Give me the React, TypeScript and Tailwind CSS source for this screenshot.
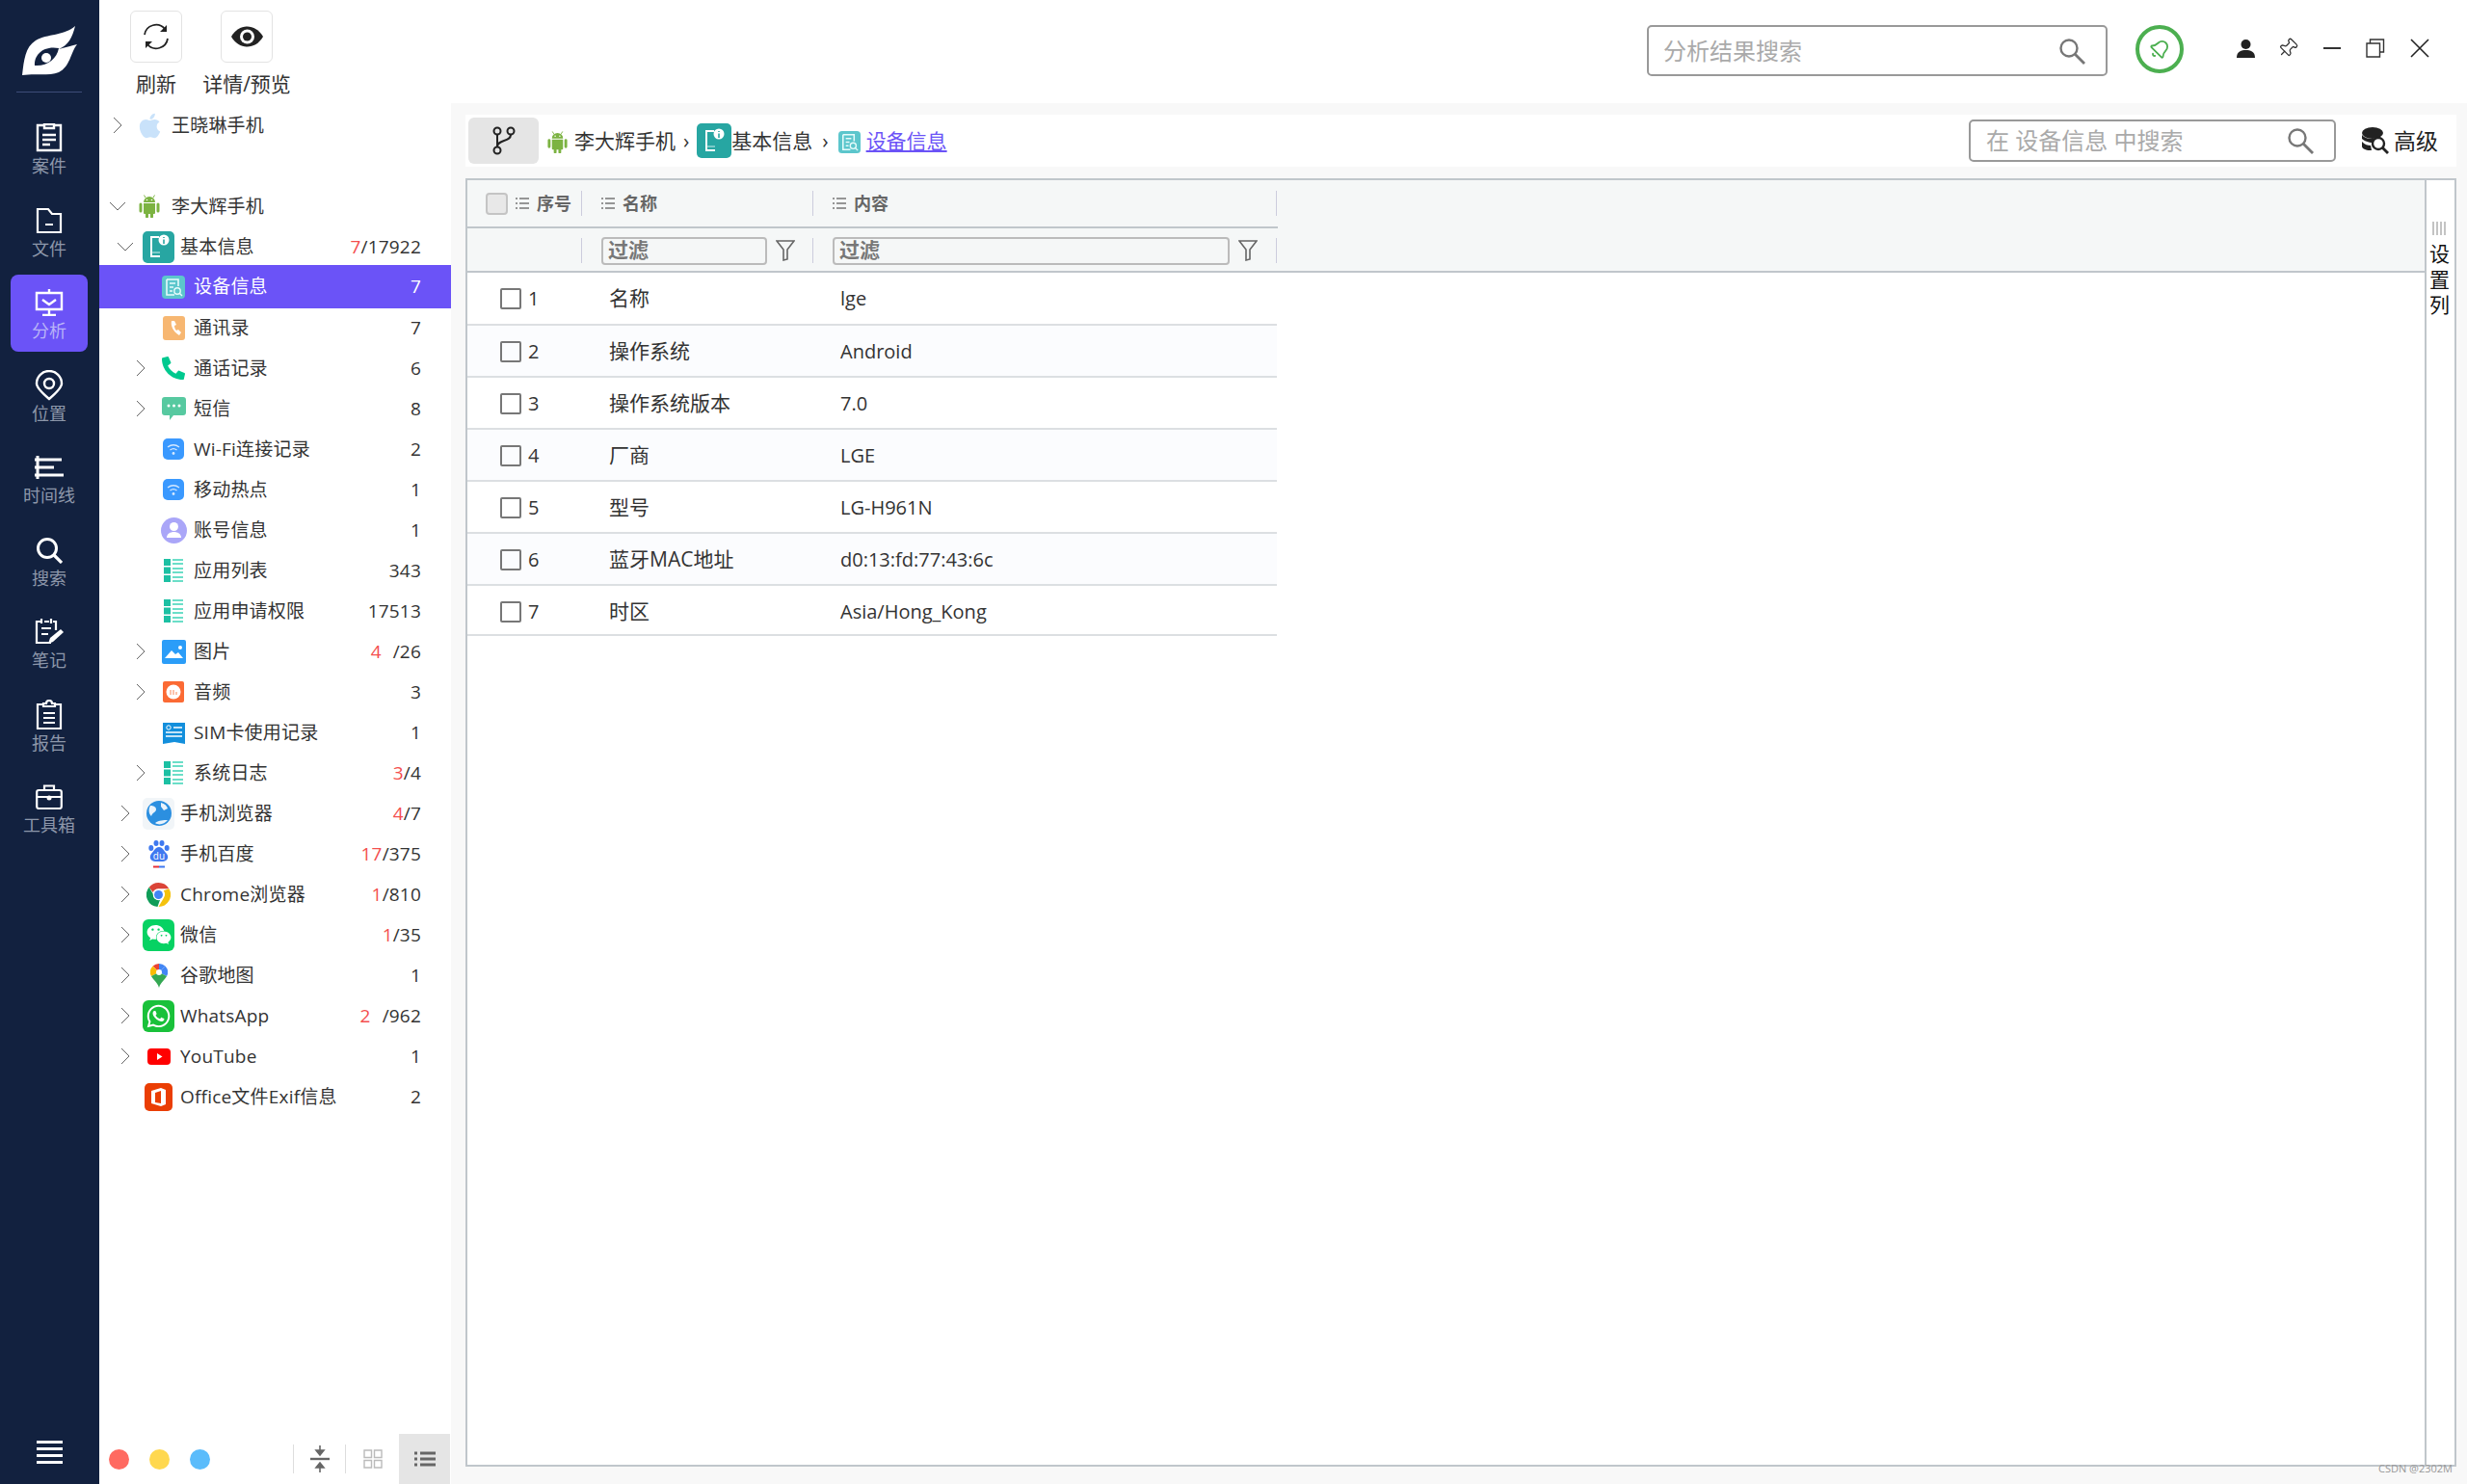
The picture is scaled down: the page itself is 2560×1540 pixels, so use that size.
import { useState, type ReactNode } from 'react';
import { FaApple, FaPhoneAlt, FaWeixin, FaWhatsapp } from 'react-icons/fa';
import { Bell, Pin } from 'lucide-react';

const S = (p: { w: number; h: number; vb?: string; children: ReactNode; className?: string }) => (
  <svg width={p.w} height={p.h} viewBox={p.vb ?? `0 0 ${p.w} ${p.h}`} fill="none" className={p.className}>
    {p.children}
  </svg>
);

const navIcons: Record<string, ReactNode> = {
  案件: (
    <S w={28} h={30}>
      <path d="M9 2H2v26h24V2h-7M9 1h10v4H9zM7 12h14M7 17h14M7 22h8" stroke="#fff" strokeWidth="2.4" />
    </S>
  ),
  文件: (
    <S w={28} h={28}>
      <path d="M2 2h11l4 5h9v19H2zM10 18h8" stroke="#fff" strokeWidth="2.2" />
    </S>
  ),
  分析: (
    <S w={30} h={28}>
      <path d="M2 4h26v17H2zM15 0v4M15 21v5M8 27h14M8 11l7 5 7-5" stroke="#fff" strokeWidth="2.4" />
    </S>
  ),
  位置: (
    <S w={30} h={32}>
      <path d="M15 30C8 24 2 18 2 14a13 13 0 0 1 26 0c0 4-6 10-13 16z" stroke="#fff" strokeWidth="2.4" />
      <circle cx="15" cy="14" r="5" stroke="#fff" strokeWidth="2.4" />
    </S>
  ),
  时间线: (
    <S w={30} h={24}>
      <path d="M3 0v24M0 4h28M0 12h20M0 20h30" stroke="#fff" strokeWidth="3" />
    </S>
  ),
  搜索: (
    <S w={28} h={28}>
      <circle cx="12" cy="12" r="9.5" stroke="#fff" strokeWidth="3" />
      <path d="M19 19l8 8" stroke="#fff" strokeWidth="3.2" />
    </S>
  ),
  笔记: (
    <S w={30} h={28}>
      <path d="M7 3H2v22h15M10 3h5M19 3h3v9M7 0v5M17 0v5M7 10h10M7 16h7" stroke="#fff" strokeWidth="2.2" />
      <path d="M14 26l2-6 11-9 3 3-11 10z" fill="#fff" />
    </S>
  ),
  报告: (
    <S w={28} h={32}>
      <path d="M8 5H2v25h24V5h-6M8 7V4h3a3 3 0 0 1 6 0h3v3zM8 14h12M8 19h12M8 24h12" stroke="#fff" strokeWidth="2.2" />
    </S>
  ),
  工具箱: (
    <S w={28} h={26}>
      <rect x="1.2" y="6" width="25.6" height="19" rx="2" stroke="#fff" strokeWidth="2.2" />
      <path d="M9 6V1.5h10V6M1 13h26" stroke="#fff" strokeWidth="2.2" />
      <circle cx="14" cy="14" r="2.5" fill="#fff" />
    </S>
  ),
};

const navItems = ['案件', '文件', '分析', '位置', '时间线', '搜索', '笔记', '报告', '工具箱'];

function Logo() {
  return (
    <S w={57} h={51}>
      <path
        d="M0 51C2 35 3 22 14 15 26 8 44 10 55 0 52 12 48 20 38 24 46 22 52 20 57 19 50 28 50 42 38 48 28 52 12 49 0 51Z"
        fill="#fff"
      />
      <path d="M13 41C12 30 22 20 38 23 36 34 26 42 13 41Z" fill="#12213f" />
      <circle cx="25" cy="33" r="5" fill="#fff" />
    </S>
  );
}

function Nav() {
  const [active] = useState('分析');
  return (
    <nav className="flex w-[103px] shrink-0 flex-col items-center bg-[#12213f] pr-px">
      <div className="flex h-[96px] w-[68px] shrink-0 items-start justify-center border-b border-[#3d4c78] pt-[27px]">
        <Logo />
      </div>
      <div className="mt-[18px] flex flex-col gap-[5.5px]">
        {navItems.map((n) => (
          <div
            key={n}
            className={`flex h-[80px] w-[80px] flex-col items-center rounded-[8px] pt-[13px] ${n === active ? 'bg-[#6b53f7] text-[#b9b3f7]' : 'text-[#8d97aa]'}`}
          >
            <div className="flex h-[32px] items-center">{navIcons[n]}</div>
            <div className="mt-[2px] text-[18px] leading-[22px]">{n}</div>
          </div>
        ))}
      </div>
      <div className="mt-auto mb-[21px] flex flex-col gap-[4px]">
        {[0, 1, 2, 3].map((i) => (
          <div key={i} className="h-[3px] w-[27px] bg-white" />
        ))}
      </div>
    </nav>
  );
}

const Chevron = ({ open }: { open?: boolean }) =>
  open ? (
    <S w={18} h={10}>
      <path d="M1 1l8 8 8-8" stroke="#666" />
    </S>
  ) : (
    <S w={10} h={18}>
      <path d="M1 1l8 8-8 8" stroke="#666" />
    </S>
  );

const AndroidIcon = ({ size = 24 }: { size?: number }) => (
  <S w={size} h={size} vb="0 0 22 24">
    <path d="M5 8a6 6 0 0 1 12 0z" fill="#7cb342" />
    <path d="M7 3L5.500 0.500M15 3l1.500-2.500" stroke="#7cb342" />
    <circle cx="8.500" cy="5.500" r="0.800" fill="#fff" />
    <circle cx="13.500" cy="5.500" r="0.800" fill="#fff" />
    <path d="M5 9h12v10a1 1 0 0 1-1 1H6a1 1 0 0 1-1-1z" fill="#7cb342" />
    <path d="M2 10v7M20 10v7M8.500 20v3M13.500 20v3" stroke="#7cb342" strokeWidth="3" strokeLinecap="round" />
  </S>
);

const BaseInfoIcon = () => (
  <div className="flex h-[33px] w-[33px] items-center justify-center rounded-[5px] bg-[#27a6a2]">
    <S w={24} h={26}>
      <path d="M12 3H4v20h9" stroke="#fff" strokeWidth="2" />
      <path d="M4 19h9" stroke="#cfeeee" strokeWidth="1" />
      <circle cx="17" cy="6" r="5.500" fill="#fff" />
      <path d="M17 3v1M17 5.500V10" stroke="#27a6a2" strokeWidth="1.600" />
    </S>
  </div>
);

const DocIcon = ({ size = 24 }: { size?: number }) => (
  <S w={size} h={size} vb="0 0 24 24">
    <rect width="24" height="24" rx="4" fill="#5cc6cc" />
    <path d="M5 4h12v7M5 4v16h8M8 8h6M8 12h4M8 16h3" stroke="#e6fbfb" strokeWidth="1.600" />
    <circle cx="16" cy="16" r="3.200" stroke="#e6fbfb" strokeWidth="1.400" />
    <path d="M18 18l3 3" stroke="#e6fbfb" strokeWidth="1.400" />
  </S>
);

const ListIcon = () => (
  <S w={20} h={24}>
    <path d="M0 0h7v7H0zM0 8.500h7v7H0zM0 17h7v7H0z" fill="#1cc0a3" />
    <path d="M9 1h11M9 5h11M9 10h11M9 14h11M9 19h11M9 23h11" stroke="#3bd3b7" strokeWidth="1.500" />
  </S>
);

const WifiIcon = () => (
  <S w={22} h={22}>
    <rect width="22" height="22" rx="5" fill="#3a99ff" />
    <path d="M5 9c4-3 8-3 12 0M7.500 12c2.500-2 4.500-2 7 0" stroke="#d6e9ff" strokeWidth="1.300" />
    <circle cx="11" cy="15.500" r="1.400" fill="#d6e9ff" />
  </S>
);

const treeIcon: Record<string, ReactNode> = {
  apple: <FaApple size={29} color="#c9e2fa" />,
  android: <AndroidIcon />,
  base: <BaseInfoIcon />,
  doc: <DocIcon />,
  contacts: (
    <S w={23} h={25}>
      <rect width="23" height="25" rx="3" fill="#f7b772" />
      <path d="M9 5c-1 4 1 11 8 15l2-3-3-3-2 1c-1-1-2-3-2-5l2-1-2-4z" fill="#fff" />
    </S>
  ),
  phone: <FaPhoneAlt size={24} color="#00c98f" />,
  sms: (
    <S w={25} h={24}>
      <path d="M3 0h19a3 3 0 0 1 3 3v13a3 3 0 0 1-3 3H12l-4 5v-5H3a3 3 0 0 1-3-3V3a3 3 0 0 1 3-3z" fill="#57c9a0" />
      <circle cx="7" cy="9" r="1.500" fill="#fff" />
      <circle cx="12.500" cy="9" r="1.500" fill="#fff" />
      <circle cx="18" cy="9" r="1.500" fill="#fff" />
    </S>
  ),
  wifi: <WifiIcon />,
  account: (
    <S w={27} h={27}>
      <circle cx="13.500" cy="13.500" r="13.500" fill="#aaa6f8" />
      <circle cx="13.500" cy="9.500" r="4.500" fill="#fff" />
      <path d="M6 21c0-8 15-8 15 0z" fill="#fff" />
    </S>
  ),
  list: <ListIcon />,
  image: (
    <S w={25} h={25}>
      <rect width="25" height="25" rx="2" fill="#2b9df8" />
      <path d="M3 19l7-8 4 4 3-2 5 6z" fill="#fff" />
      <circle cx="19" cy="8" r="2" fill="#fff" />
    </S>
  ),
  audio: (
    <S w={22} h={22}>
      <rect width="22" height="22" rx="2" fill="#fb6a34" />
      <circle cx="11" cy="11" r="7.500" fill="#fff" />
      <path d="M8 9v5M11 9v5M14 11v3" stroke="#fb9a74" strokeWidth="1.200" />
    </S>
  ),
  sim: (
    <S w={23} h={23}>
      <path d="M0 1h23v22l-11-2-12 2z" fill="#138fdc" />
      <circle cx="6" cy="6" r="2.200" stroke="#fff" />
      <path d="M11 6h9M3 11h17M3 15h17" stroke="#fff" strokeWidth="1.500" />
    </S>
  ),
  globe: (
    <div className="flex h-[33px] w-[33px] items-center justify-center rounded-[5px] bg-[#f1f5f8]">
      <S w={26} h={26}>
        <circle cx="13" cy="13" r="13" fill="#2b8fe0" />
        <path d="M4 5c3 0 6 1 6 4s-4 3-5 7c-3-3-3-8-1-11zM15 2c4 1 6 3 7 6l-4 2-3-4zM9 23c4-3 9-3 13-3-3 4-9 6-13 3z" fill="#eaf3fb" />
      </S>
    </div>
  ),
  baidu: (
    <S w={22} h={29}>
      <ellipse cx="2.800" cy="8" rx="2.500" ry="3" fill="#3f79f0" />
      <ellipse cx="8" cy="3" rx="2.500" ry="3" fill="#3f79f0" />
      <ellipse cx="14" cy="3" rx="2.500" ry="3" fill="#3f79f0" />
      <ellipse cx="19.200" cy="8" rx="2.500" ry="3" fill="#3f79f0" />
      <path d="M11 7c4 0 5 4 8 7 3 4 0 8-4 8H7c-4 0-7-4-4-8 3-3 4-7 8-7z" fill="#3f79f0" />
      <text x="11" y="20" textAnchor="middle" fontSize="10" fill="#fff" fontFamily="Open Sans">du</text>
      <path d="M5 27.500h6" stroke="#e5303a" strokeWidth="2" />
      <path d="M11 27.500h6" stroke="#3f79f0" strokeWidth="2" />
    </S>
  ),
  chrome: (
    <S w={25} h={25} vb="0 0 24 24">
      <path d="M12 0a12 12 0 0 1 10.400 6H12a6 6 0 0 0-5.500 3.500L2.600 4.500A12 12 0 0 1 12 0z" fill="#db4437" />
      <path d="M22.400 6A12 12 0 0 1 12 24l5.200-9A6 6 0 0 0 17 8z" fill="#f4c20d" />
      <path d="M2.600 4.500L7 12a5 5 0 0 0 6.500 5L11 24A12 12 0 0 1 2.600 4.500z" fill="#0f9d58" />
      <circle cx="12" cy="12" r="5.500" fill="#fff" />
      <circle cx="12" cy="12" r="4.300" fill="#4285f4" />
    </S>
  ),
  wechat: (
    <div className="flex h-[33px] w-[33px] items-center justify-center rounded-[6px] bg-[#07d263]">
      <FaWeixin size={26} color="#fff" />
    </div>
  ),
  maps: (
    <S w={18} h={25}>
      <path d="M9 0a9 9 0 0 1 6.400 2.600L9 9z" fill="#4285f4" />
      <path d="M15.400 2.600A9 9 0 0 1 17 13L9 9z" fill="#4285f4" />
      <path d="M9 0a9 9 0 0 0-6.400 2.600L9 9z" fill="#ea4335" />
      <path d="M2.600 2.600A9 9 0 0 0 1 13l8-4z" fill="#fbbc04" />
      <path d="M1 13c2 4 7 7 8 12 1-5 6-8 8-12l-8-4z" fill="#34a853" />
      <circle cx="9" cy="9" r="3" fill="#fff" />
    </S>
  ),
  whatsapp: (
    <div className="flex h-[33px] w-[33px] items-center justify-center rounded-[6px] bg-[#19c13a]">
      <FaWhatsapp size={27} color="#fff" />
    </div>
  ),
  youtube: (
    <S w={24} h={17}>
      <rect width="24" height="17" rx="4" fill="#f00" />
      <path d="M10 5l5.500 3.500L10 12z" fill="#fff" />
    </S>
  ),
  office: (
    <div className="flex h-[29px] w-[29px] items-center justify-center rounded-[5px] bg-[#ea3e04]">
      <S w={17} h={21}>
        <path d="M11 1L1 4v13l10 3 5-2V3zM11 4v13L5 16V6z" fill="#fff" />
      </S>
    </div>
  ),
};

type Row = {
  level: 1 | 2 | 3;
  label: string;
  icon: string;
  chevron?: 'open' | 'closed';
  red?: string;
  count?: string;
  gap?: boolean;
  selected?: boolean;
};

const rows: Row[] = [
  { level: 2, label: '基本信息', icon: 'base', chevron: 'open', red: '7', count: '/17922' },
  { level: 3, label: '设备信息', icon: 'doc', count: '7', selected: true },
  { level: 3, label: '通讯录', icon: 'contacts', count: '7' },
  { level: 3, label: '通话记录', icon: 'phone', chevron: 'closed', count: '6' },
  { level: 3, label: '短信', icon: 'sms', chevron: 'closed', count: '8' },
  { level: 3, label: 'Wi-Fi连接记录', icon: 'wifi', count: '2' },
  { level: 3, label: '移动热点', icon: 'wifi', count: '1' },
  { level: 3, label: '账号信息', icon: 'account', count: '1' },
  { level: 3, label: '应用列表', icon: 'list', count: '343' },
  { level: 3, label: '应用申请权限', icon: 'list', count: '17513' },
  { level: 3, label: '图片', icon: 'image', chevron: 'closed', red: '4', count: '/26', gap: true },
  { level: 3, label: '音频', icon: 'audio', chevron: 'closed', count: '3' },
  { level: 3, label: 'SIM卡使用记录', icon: 'sim', count: '1' },
  { level: 3, label: '系统日志', icon: 'list', chevron: 'closed', red: '3', count: '/4' },
  { level: 2, label: '手机浏览器', icon: 'globe', chevron: 'closed', red: '4', count: '/7' },
  { level: 2, label: '手机百度', icon: 'baidu', chevron: 'closed', red: '17', count: '/375' },
  { level: 2, label: 'Chrome浏览器', icon: 'chrome', chevron: 'closed', red: '1', count: '/810' },
  { level: 2, label: '微信', icon: 'wechat', chevron: 'closed', red: '1', count: '/35' },
  { level: 2, label: '谷歌地图', icon: 'maps', chevron: 'closed', count: '1' },
  { level: 2, label: 'WhatsApp', icon: 'whatsapp', chevron: 'closed', red: '2', count: '/962', gap: true },
  { level: 2, label: 'YouTube', icon: 'youtube', chevron: 'closed', count: '1' },
  { level: 2, label: 'Office文件Exif信息', icon: 'office', count: '2' },
];

const levelPad = { 1: 'pl-[7px]', 2: 'pl-[15px]', 3: 'pl-[31px]' };
const levelIcon = { 1: 'ml-0 w-[42px]', 2: 'ml-[6px] w-[33px]', 3: 'ml-[2px] w-[40px]' };
const levelText = { 1: 'ml-[2px]', 2: 'ml-[6px]', 3: 'ml-px' };

function TreeRow({ r }: { r: Row }) {
  return (
    <div
      className={`flex items-center pr-[31px] ${levelPad[r.level]} ${r.selected ? 'relative z-10 -mt-[2px] -mb-px h-[45px] bg-[#6b53f7] text-white' : 'h-[42px] text-[#333]'}`}
    >
      <div className="flex w-[24px] shrink-0 justify-center">
        {r.chevron && <Chevron open={r.chevron === 'open'} />}
      </div>
      <div className={`flex shrink-0 justify-center ${levelIcon[r.level]}`}>{treeIcon[r.icon]}</div>
      <div className={levelText[r.level]}>{r.label}</div>
      <div className="ml-auto">
        {r.red && <span className={`text-[#f44f4f] ${r.gap ? 'mr-[12px]' : ''}`}>{r.red}</span>}
        {r.count}
      </div>
    </div>
  );
}

function BottomBar() {
  return (
    <div className="flex h-[52px] shrink-0 items-center pl-[10px]">
      <div className="flex gap-[21px]">
        <div className="h-[21px] w-[21px] rounded-full bg-[#ff6a61]" />
        <div className="h-[21px] w-[21px] rounded-full bg-[#ffd84f]" />
        <div className="h-[21px] w-[21px] rounded-full bg-[#5bbcfb]" />
      </div>
      <div className="ml-auto flex h-full items-center">
        <div className="flex h-[30px] w-[55px] items-center justify-center border-x border-[#ddd]">
          <S w={20} h={28}>
            <path d="M0 14h20" stroke="#666" strokeWidth="2.400" />
            <path d="M10 0v6M6 5h8l-4 5zM10 28v-6M6 23h8l-4-5z" fill="#666" stroke="#666" strokeWidth="1.600" />
          </S>
        </div>
        <div className="flex w-[55px] justify-center">
          <S w={20} h={20}>
            <path d="M1 1h7.500v7.500H1zM11.500 1H19v7.500h-7.500zM1 11.500h7.500V19H1zM11.500 11.500H19V19h-7.500z" stroke="#bbb" strokeWidth="1.400" />
          </S>
        </div>
        <div className="mr-px flex h-full w-[53px] items-center justify-center bg-[#e5e5e5]">
          <S w={22} h={16}>
            <path d="M0 2h3M6 2h16M0 8h3M6 8h16M0 14h3M6 14h16" stroke="#666" strokeWidth="3" />
          </S>
        </div>
      </div>
    </div>
  );
}

function TreePanel() {
  return (
    <aside className="flex w-[365px] shrink-0 flex-col bg-white text-[19px] tracking-[0.2px]">
      <div className="flex h-[107px] shrink-0 pl-[12px] text-[21px] tracking-normal text-[#333]">
        {[
          {
            label: '刷新',
            icon: (
              <S w={28} h={28}>
                <path d="M2 12A12 12 0 0 1 23 6M26 16A12 12 0 0 1 5 22" stroke="#222" strokeWidth="1.800" />
                <path d="M25 2v7h-7z M3 26v-7h7z" fill="#222" />
              </S>
            ),
          },
          {
            label: '详情/预览',
            icon: (
              <S w={33} h={22}>
                <path d="M0 11C8-3 25-3 33 11 25 25 8 25 0 11z" fill="#222" />
                <circle cx="16.500" cy="11" r="7.500" fill="#fff" />
                <circle cx="16.500" cy="11" r="4.500" fill="#222" />
              </S>
            ),
          },
        ].map((b) => (
          <div key={b.label} className="flex w-[94px] flex-col items-center pt-[11px]">
            <div className="flex h-[54px] w-[54px] items-center justify-center rounded-[6px] border border-[#e3e3e3]">{b.icon}</div>
            <div className="mt-[9px] leading-[26px] whitespace-nowrap">{b.label}</div>
          </div>
        ))}
      </div>
      <div className="mt-[2px] flex flex-1 flex-col">
        <TreeRow r={{ level: 1, label: '王晓琳手机', icon: 'apple', chevron: 'closed' }} />
        <div className="h-[42px]" />
        <TreeRow r={{ level: 1, label: '李大辉手机', icon: 'android', chevron: 'open' }} />
        {rows.map((r) => (
          <TreeRow key={r.label} r={r} />
        ))}
      </div>
      <BottomBar />
    </aside>
  );
}

const SearchIcon = () => (
  <S w={28} h={28}>
    <circle cx="11" cy="11" r="8.500" stroke="#777" strokeWidth="2.400" />
    <path d="M17 17l10 10" stroke="#777" strokeWidth="2.800" />
  </S>
);

function TopBar() {
  return (
    <header className="flex h-[107px] shrink-0 items-start justify-end bg-white pt-[26px] pr-[39px]">
      <div className="flex h-[53px] w-[478px] items-center justify-between rounded-[5px] border-2 border-[#999] pr-[21px] pl-[15px] text-[24px] text-[#aaa]">
        分析结果搜索
        <SearchIcon />
      </div>
      <div className="ml-[29px] flex h-[50px] w-[50px] items-center justify-center rounded-full border-[4px] border-[#4caf50]">
        <Bell size={22} color="#4caf50" strokeWidth={2} className="rotate-45" />
      </div>
      <div className="ml-[55px] flex h-[50px] items-center gap-[26px] pb-[2px]">
        <S w={19} h={20} className="-mr-[3px]">
          <circle cx="9.500" cy="6" r="5" fill="#222" />
          <path d="M0 20c0-7 5-8 9.500-8s9.500 1 9.500 8z" fill="#222" />
        </S>
        <Pin size={22} color="#333" strokeWidth={1.400} className="rotate-45" />
        <div className="h-[2px] w-[18px] bg-[#333]" />
        <S w={20} h={20}>
          <path d="M4.500 5V1h14v13h-4M1 5h13.500v14H1z" stroke="#333" strokeWidth="1.400" />
        </S>
        <S w={20} h={20}>
          <path d="M1 1l18 18M19 1L1 19" stroke="#222" strokeWidth="1.600" />
        </S>
      </div>
    </header>
  );
}

function Breadcrumb() {
  return (
    <div className="flex h-[54px] shrink-0 items-center bg-white pr-[19px] pl-[3px] text-[21px] text-[#333]">
      <div className="flex h-[48px] w-[73px] items-center justify-center rounded-[6px] bg-[#e5e5e5]">
        <S w={24} h={30}>
          <circle cx="5" cy="5" r="3.500" stroke="#222" strokeWidth="2" />
          <circle cx="19" cy="5" r="3.500" stroke="#222" strokeWidth="2" />
          <circle cx="5" cy="25" r="3.500" stroke="#222" strokeWidth="2" />
          <path d="M5 9v12M19 9c0 7-14 5-14 12" stroke="#222" strokeWidth="2" />
        </S>
      </div>
      <div className="ml-[8px] pt-[3px]">
        <AndroidIcon size={23} />
      </div>
      <span className="ml-[6px] pt-[2px]">李大辉手机</span>
      <span className="mx-[8px] pt-[2px]">›</span>
      <div className="h-[36px] w-[36px] [&>div]:h-full [&>div]:w-full">
        <BaseInfoIcon />
      </div>
      <span className="pt-[2px]">基本信息</span>
      <span className="mx-[10px] pt-[2px]">›</span>
      <div className="pt-[3px]">
        <DocIcon size={23} />
      </div>
      <span className="ml-[6px] pt-[2px] text-[#6b53f7] underline">设备信息</span>
      <div className="ml-auto flex h-[44px] w-[381px] items-center justify-between rounded-[5px] border-2 border-[#999] pr-[21px] pl-[16px] text-[24px] text-[#aaa]">
        在 设备信息 中搜索
        <SearchIcon />
      </div>
      <div className="ml-[27px] flex items-center gap-[5px] text-[23px] text-[#222]">
        <S w={28} h={28}>
          <ellipse cx="11" cy="6" rx="11" ry="6" fill="#222" />
          <path d="M0 8c3 4 10 5 14 3l-3 5c-4 0-9-2-11-4zM0 15c3 3 6 4 9 4l1 5H8c-4 0-8-2-8-4z" fill="#222" />
          <circle cx="17" cy="17" r="6" stroke="#222" strokeWidth="2.400" />
          <path d="M21 21l6 6" stroke="#222" strokeWidth="2.800" />
        </S>
        高级
      </div>
    </div>
  );
}

const data = [
  ['1', '名称', 'lge'],
  ['2', '操作系统', 'Android'],
  ['3', '操作系统版本', '7.0'],
  ['4', '厂商', 'LGE'],
  ['5', '型号', 'LG-H961N'],
  ['6', '蓝牙MAC地址', 'd0:13:fd:77:43:6c'],
  ['7', '时区', 'Asia/Hong_Kong'],
];

// row heights follow the reference: first one is a px taller, last one is cut short
const rowHeight = ['h-[55px]', 'h-[54px] pt-[2px]', 'h-[54px] pt-[2px]', 'h-[54px] pt-[2px]', 'h-[54px] pt-[2px]', 'h-[54px] pt-[2px]', 'h-[52px] pt-[3px]'];

const ColLines = () => (
  <S w={14} h={12}>
    <path d="M0 1h2M4 1h10M0 6h2M4 6h10M0 11h2M4 11h10" stroke="#777" strokeWidth="1.500" />
  </S>
);

const Funnel = () => (
  <S w={20} h={22}>
    <path d="M1 1h18l-7 9v10l-4 1V10z" stroke="#666" strokeWidth="1.600" />
  </S>
);

const FilterInput = ({ w }: { w: string }) => (
  <div className={`flex h-[29px] items-center rounded-[4px] border-2 border-[#bbb] pl-[5px] text-[21px] font-bold text-[#777] ${w}`}>
    过滤
  </div>
);

function Table() {
  return (
    <div className="flex min-h-0 flex-1 border-2 border-[#c0c6cb] bg-white text-[21px] text-[#333]">
      <div className="flex-1">
        <div className="bg-[#f5f7f7]">
          <div className="flex h-[50px] w-[841px] items-center border-b-2 border-[#c0c6cb] text-[18px] font-semibold text-[#666]">
            <div className="flex h-[26px] w-[119px] items-center border-r border-[#ccd] pl-[19px]">
              <div className="h-[23px] w-[23px] rounded-[4px] border-2 border-[#c4c4c4] bg-[#e8e8e8]" />
              <div className="ml-[8px]"><ColLines /></div>
              <span className="ml-[8px]">序号</span>
            </div>
            <div className="flex h-[26px] w-[240px] items-center gap-[8px] border-r border-[#ccd] pl-[20px]">
              <ColLines />
              名称
            </div>
            <div className="flex h-[26px] w-[481px] items-center gap-[8px] border-r border-[#ccd] pl-[20px]">
              <ColLines />
              内容
            </div>
          </div>
          <div className="flex h-[46px] items-center border-b-2 border-[#c0c6cb] pt-[2px]">
            <div className="h-[26px] w-[119px] border-r border-[#ccd]" />
            <div className="flex h-[26px] w-[240px] items-center border-r border-[#ccd] pl-[20px]">
              <FilterInput w="w-[172px]" />
              <div className="ml-[9px]"><Funnel /></div>
            </div>
            <div className="flex h-[26px] w-[481px] items-center border-r border-[#ccd] pl-[20px]">
              <FilterInput w="w-[412px]" />
              <div className="ml-[9px]"><Funnel /></div>
            </div>
          </div>
        </div>
        {data.map((d, i) => (
          <div
            key={d[0]}
            className={`flex w-[840px] items-center border-b-2 border-[#dcdfe2] ${rowHeight[i]} ${i % 2 === 1 ? 'bg-[#fbfcfe]' : 'bg-white'}`}
          >
            <div className="flex w-[119px] items-center pl-[34px]">
              <div className="h-[22px] w-[22px] rounded-[2px] border-2 border-[#777]" />
              <span className="ml-[7px] text-[20px]">{d[0]}</span>
            </div>
            <div className="w-[240px] pl-[28px]">{d[1]}</div>
            <div className="pl-[28px] text-[20px]">{d[2]}</div>
          </div>
        ))}
      </div>
      <div className="flex w-[31px] shrink-0 flex-col items-center border-l-2 border-[#c0c6cb] pr-[2px] pt-[43px] text-[21px] leading-[26.500px] text-[#111]">
        <S w={16} h={14} className="mb-[6px]">
          <path d="M1 0v14M5 0v14M9 0v14M13 0v14" stroke="#888" />
        </S>
        <span>设</span>
        <span>置</span>
        <span>列</span>
      </div>
    </div>
  );
}

export default function App() {
  return (
    <div
      className="relative flex h-[1540px] w-[2560px] overflow-hidden bg-white"
      style={{ fontFamily: '"Open Sans", "Noto Sans CJK SC", sans-serif' }}
    >
      <Nav />
      <TreePanel />
      <main className="flex min-w-0 flex-1 flex-col">
        <TopBar />
        <div className="flex min-h-0 flex-1 flex-col bg-[#f8f8f8] pt-[12px] pr-[11px] pb-[18px] pl-[15px]">
          <Breadcrumb />
          <div className="mt-[12px] flex min-h-0 flex-1">
            <Table />
          </div>
        </div>
      </main>
      <div className="absolute right-[15px] bottom-[10px] text-[11px] leading-[12px] text-[#999]">CSDN @2302M</div>
    </div>
  );
}
